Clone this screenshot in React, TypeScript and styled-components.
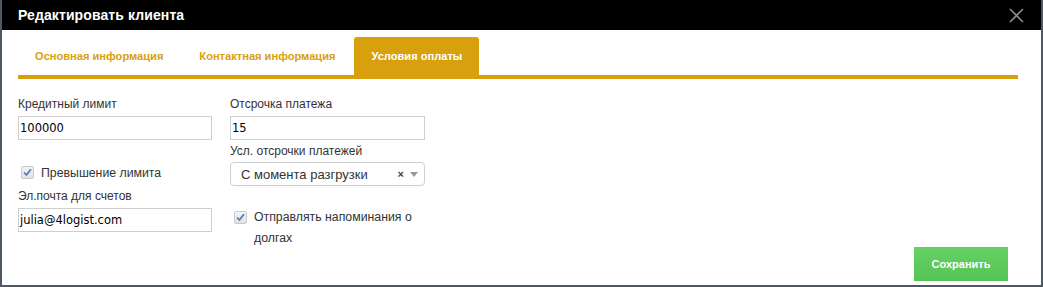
import React from "react";
import styled, { createGlobalStyle } from "styled-components";

const GOLD = "#d9a00d";

const Global = createGlobalStyle`
  html, body { margin: 0; padding: 0; }
  body {
    background: #4e5863;
    font-family: "Liberation Sans", Arial, sans-serif;
    width: 1043px;
    height: 287px;
    overflow: hidden;
  }
`;

const Modal = styled.div`
  margin: 0 2px 0 2px;
  width: 1039px;
  height: 285px;
  background: #fff;
  display: flex;
  flex-direction: column;
`;

const Header = styled.div`
  height: 30px;
  background: #000;
  display: flex;
  align-items: center;
  justify-content: space-between;
  padding: 0 16px 0 16px;
  flex-shrink: 0;
`;

const Title = styled.div`
  color: #fff;
  font-weight: bold;
  font-size: 14px;
  letter-spacing: 0.1px;
`;

const CloseBtn = styled.div`
  width: 16px;
  height: 16px;
  display: flex;
  align-items: center;
  justify-content: center;
  margin-right: 1px;
`;

const Body = styled.div`
  flex: 1;
  display: flex;
  flex-direction: column;
  padding: 7px 23px 4px 16px;
`;

const TabBar = styled.div`
  display: flex;
  border-bottom: 4px solid ${GOLD};
  height: 38px;
`;

const Tab = styled.div<{ $active?: boolean }>`
  display: flex;
  align-items: center;
  padding: 0 17px;
  font-size: 11.1px;
  font-weight: bold;
  color: ${(p) => (p.$active ? "#fff" : GOLD)};
  background: ${(p) => (p.$active ? GOLD : "transparent")};
  border-radius: 3px 3px 0 0;
  margin-right: ${(p) => (p.$active ? 0 : 2)}px;
`;

const Form = styled.div`
  flex: 1;
  display: grid;
  grid-template-columns: 194px 195px 1fr;
  column-gap: 18px;
  padding-top: 17px;
`;

const Column = styled.div`
  display: flex;
  flex-direction: column;
`;

const Label = styled.div<{ $mt?: number }>`
  font-size: 12px;
  line-height: 16px;
  color: #333;
  margin-top: ${(p) => p.$mt ?? 0}px;
  margin-bottom: 4px;
`;

const Input = styled.div`
  box-sizing: border-box;
  height: 24px;
  border: 1px solid #cfcfcf;
  padding: 0 1px;
  display: flex;
  align-items: center;
  font-family: "DejaVu Sans", Verdana, sans-serif;
  font-size: 11.5px;
  color: #000;
`;

const Select = styled.div`
  box-sizing: border-box;
  height: 24px;
  border: 1px solid #cfcfcf;
  border-radius: 4px;
  padding: 0 6px 0 10px;
  display: flex;
  align-items: center;
  font-size: 13px;
  color: #333;
  margin-top: -1px;
`;

const SelectText = styled.span`
  flex: 1;
`;

const Clear = styled.span`
  font-size: 11px;
  font-weight: bold;
  color: #444;
  margin-right: 6px;
`;

const Arrow = styled.span`
  width: 0;
  height: 0;
  border-left: 4px solid transparent;
  border-right: 4px solid transparent;
  border-top: 5px solid #999;
  margin-top: 1px;
`;

const CheckRow = styled.div<{ $mt: number; $pl: number }>`
  display: flex;
  align-items: flex-start;
  margin-top: ${(p) => p.$mt}px;
  padding-left: ${(p) => p.$pl}px;
  font-size: 12.3px;
  color: #333;
`;

const Box = styled.span`
  box-sizing: border-box;
  width: 13px;
  height: 13px;
  border: 1px solid #c9c9c9;
  border-radius: 2px;
  background: linear-gradient(#f4f4f4, #e2e2e2);
  flex-shrink: 0;
  display: flex;
  align-items: center;
  justify-content: center;
  margin-right: 7px;
`;

const CheckText = styled.span<{ $lh: number; $mt?: number }>`
  line-height: ${(p) => p.$lh}px;
  margin-top: ${(p) => p.$mt ?? 0}px;
`;

const Actions = styled.div`
  display: flex;
  justify-content: flex-end;
  align-items: flex-end;
  padding-right: 10px;
`;

const SaveButton = styled.button`
  width: 94px;
  height: 34px;
  border: none;
  background: linear-gradient(#66d165, #55c356);
  color: #fff;
  font-family: "Liberation Sans", Arial, sans-serif;
  font-weight: bold;
  font-size: 11px;
  cursor: pointer;
`;

const Check = () => (
  <Box>
    <svg width="11" height="11" viewBox="0 0 11 11">
      <path d="M2 5.5 L4.4 8 L9 2.2" fill="none" stroke="#4b7fc2" strokeWidth="1.8" />
    </svg>
  </Box>
);

export default function App() {
  return (
    <>
      <Global />
      <Modal>
        <Header>
          <Title>Редактировать клиента</Title>
          <CloseBtn>
            <svg width="15" height="15" viewBox="0 0 15 15">
              <path d="M1 1 L14 14 M14 1 L1 14" stroke="#8a8a8a" strokeWidth="1.6" />
            </svg>
          </CloseBtn>
        </Header>
        <Body>
          <TabBar>
            <Tab>Основная информация</Tab>
            <Tab>Контактная информация</Tab>
            <Tab $active>Условия оплаты</Tab>
          </TabBar>
          <Form>
            <Column>
              <Label>Кредитный лимит</Label>
              <Input>100000</Input>
              <CheckRow $mt={26} $pl={3}>
                <Check />
                <CheckText $lh={14}>Превышение лимита</CheckText>
              </CheckRow>
              <Label $mt={8}>Эл.почта для счетов</Label>
              <Input>julia@4logist.com</Input>
            </Column>
            <Column>
              <Label>Отсрочка платежа</Label>
              <Input>15</Input>
              <Label $mt={3}>Усл. отсрочки платежей</Label>
              <Select>
                <SelectText>С момента разгрузки</SelectText>
                <Clear>×</Clear>
                <Arrow />
              </Select>
              <CheckRow $mt={25} $pl={4}>
                <Check />
                <CheckText $lh={21} $mt={-4}>
                  Отправлять напоминания о долгах
                </CheckText>
              </CheckRow>
            </Column>
            <Actions>
              <SaveButton>Сохранить</SaveButton>
            </Actions>
          </Form>
        </Body>
      </Modal>
    </>
  );
}
